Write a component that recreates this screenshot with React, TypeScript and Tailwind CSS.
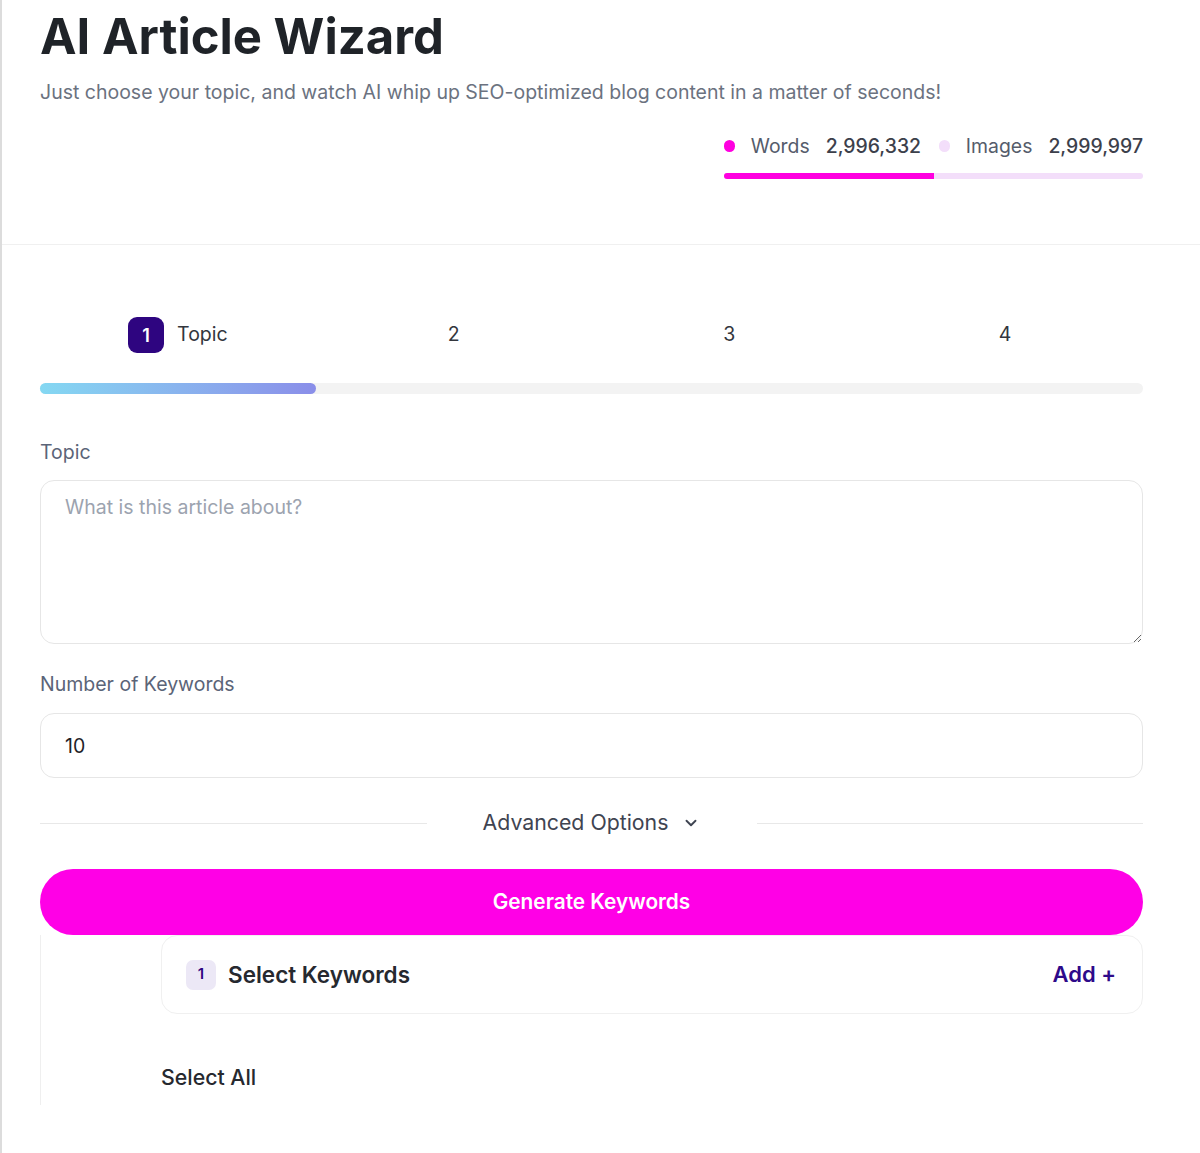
const steps = [
  { num: "1", label: "Topic", active: true },
  { num: "2", label: "", active: false },
  { num: "3", label: "", active: false },
  { num: "4", label: "", active: false },
];

function ChevronDown() {
  return (
    <svg width="18" height="18" viewBox="0 0 24 24" fill="none" stroke="currentColor" strokeWidth="2.5" strokeLinecap="round" strokeLinejoin="round">
      <path d="m6 9 6 6 6-6" />
    </svg>
  );
}

export default function App() {
  return (
    <div className="min-h-[1153px] border-l-2 border-[#dcdcdc] bg-white font-['Inter','Noto_Sans',sans-serif] text-[#1f2328]">
      <header className="border-b border-[#f0f0f0] pb-[65px] pl-[38px] pr-[57px] pt-[12px]">
        <h1 className="text-[49px] font-bold leading-none text-[#1f2328]">AI Article Wizard</h1>
        <p className="mt-[17px] text-[19.5px] leading-[28px] text-[#6b7280]">
          Just choose your topic, and watch AI whip up SEO-optimized blog content in a matter of seconds!
        </p>
        <div className="flex justify-end">
          <div className="mt-[26px] w-[419px]">
            <div className="flex items-center text-[19.4px] leading-[28px]">
              <span className="h-[12px] w-[12px] rounded-full bg-[#ff00e0]" />
              <span className="ml-[16px] text-[#555c6b]">Words</span>
              <span className="ml-[16px] font-medium text-[#3c404b]">2,996,332</span>
              <span className="ml-[18px] h-[12px] w-[12px] rounded-full bg-[#f3defa]" />
              <span className="ml-[16px] text-[#555c6b]">Images</span>
              <span className="ml-[16px] font-medium text-[#3c404b]">2,999,997</span>
            </div>
            <div className="mt-[13px] flex h-[6px] overflow-hidden rounded-full bg-[#f3defa]">
              <div className="h-full w-[50%] bg-[#ff00e0]" />
            </div>
          </div>
        </div>
      </header>

      <section className="pl-[38px] pr-[57px] pt-[72px]">
        <div className="grid grid-cols-4">
          {steps.map((s) => (
            <div key={s.num} className="flex h-[36px] items-center justify-center gap-[13px] text-[19.5px] text-[#33363d]">
              {s.active ? (
                <span className="flex h-[36px] w-[36px] items-center justify-center rounded-[9px] bg-[#2e0580] text-[18px] font-semibold text-white">
                  {s.num}
                </span>
              ) : (
                <span>{s.num}</span>
              )}
              {s.label && <span>{s.label}</span>}
            </div>
          ))}
        </div>
        <div className="mt-[30px] h-[11px] rounded-full bg-[#f3f3f3]">
          <div className="h-full w-[25%] rounded-full bg-gradient-to-r from-[#84d8f2] to-[#8a8ee9]" />
        </div>

        <label className="mt-[44px] block text-[19.5px] leading-[28px] text-[#5b6478]">Topic</label>
        <textarea
          className="mt-[14px] block h-[164px] w-full rounded-[14px] border border-[#e6e6e6] px-[24px] py-[12px] text-[19.5px] leading-[28px] text-[#1f2328] outline-none placeholder:text-[#9ca3af]"
          placeholder="What is this article about?"
        />

        <label className="mt-[26px] block text-[19.5px] leading-[28px] text-[#5b6478]">Number of Keywords</label>
        <div className="mt-[15px] flex h-[65px] items-center rounded-[14px] border border-[#e6e6e6] px-[24px] pt-[2px] text-[19.5px] text-[#1f2328]">
          10
        </div>

        <div className="mt-[31px] flex h-[28px] items-center">
          <div className="h-px flex-1 bg-[#e8e8e8]" />
          <div className="flex w-[330px] items-center justify-center gap-[14px] text-[21.3px] text-[#3f4451]">
            <span>Advanced Options</span>
            <ChevronDown />
          </div>
          <div className="h-px flex-1 bg-[#e8e8e8]" />
        </div>

        <button className="mt-[32px] flex h-[66px] w-full items-center justify-center rounded-full bg-[#ff00e6] text-[20.8px] font-semibold text-white">
          Generate Keywords
        </button>

        <div className="border-l border-[#efefef] pb-[14px] pl-[120px]">
          <div className="flex h-[79px] items-center justify-between rounded-[16px] border border-[#f0f0f0] pl-[24px] pr-[26px]">
            <div className="flex items-center gap-[12px]">
              <span className="flex h-[30px] w-[30px] items-center justify-center rounded-[7px] bg-[#ece8f6] text-[15px] font-semibold text-[#2e0580]">
                1
              </span>
              <span className="text-[22.5px] font-semibold text-[#26292f]">Select Keywords</span>
            </div>
            <span className="text-[22px] font-semibold text-[#2e0a8a]">Add +</span>
          </div>
          <div className="mt-[49px] text-[21.3px] font-medium leading-[28px] text-[#26292f]">Select All</div>
        </div>
      </section>
    </div>
  );
}
